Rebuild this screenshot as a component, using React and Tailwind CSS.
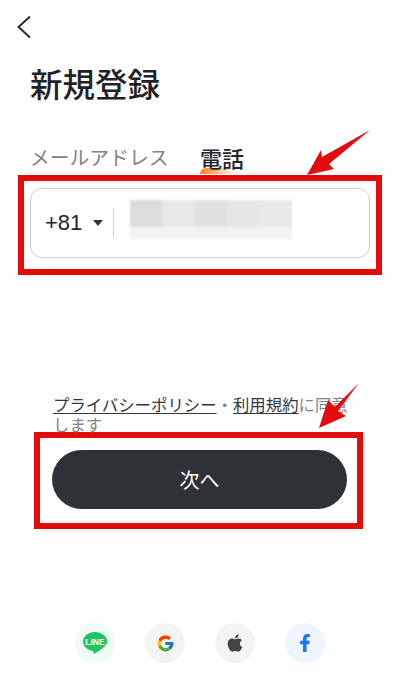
import { FcGoogle } from 'react-icons/fc';
import { FaApple, FaFacebookF } from 'react-icons/fa';

const BLUR_BLOCKS = ['bg-[#dcdcdc]', 'bg-[#e8e8e8]', 'bg-[#e1e1e1]', 'bg-[#e6e6e6]', 'bg-[#e8e8e8]'];

function SocialButton({ className, children }) {
  return (
    <button className={`w-10 h-10 rounded-full flex items-center justify-center ${className}`}>
      {children}
    </button>
  );
}

export default function App() {
  return (
    <div className="relative w-[400px] h-[684px] overflow-hidden bg-white text-[#22252a] font-['Noto_Sans_CJK_JP','Liberation_Sans',sans-serif]">
      {/* back */}
      <div className="pt-[15px] pl-[16px] h-[64px]">
        <svg width="16" height="24" viewBox="0 0 16 24" fill="none" stroke="#222" strokeWidth="1.8">
          <path d="M14 1.5 L2.5 12 L14 22.5" />
        </svg>
      </div>

      <h1 className="pl-[30px] h-[50px] mt-[-3px] text-[32.5px] leading-[44px] font-medium text-[#1f2226]">新規登録</h1>

      {/* tabs */}
      <div className="flex items-end pl-[30px] h-[64px]">
        <div className="text-[19.8px] leading-[28px] text-[#808285] w-[170px] mb-[4px]">メールアドレス</div>
        <div className="relative text-[22px] leading-[30px] font-medium text-[#22252a] mb-[3px]">
          <span className="relative z-10">電話</span>
          <div className="absolute left-0 top-[26px] w-[36px] h-[6px] rounded-tl-full bg-gradient-to-r from-[#f58220] to-transparent"></div>
        </div>
      </div>

      {/* phone input */}
      <div className="ml-[18px] w-[364px] h-[100px] border-[6px] border-[#e30b0b] px-[6px] pt-[7px]">
        <div className="flex items-center h-[70px] rounded-[12px] border border-[#cfcfcf] pl-[14px]">
          <span className="text-[22px] leading-none w-[38px] font-['Liberation_Sans',sans-serif]">+81</span>
          <div className="ml-[10px] w-0 h-0 border-x-[5px] border-x-transparent border-t-[6px] border-t-[#333]"></div>
          <div className="ml-[10px] w-px h-[30px] bg-[#d4d4d4]"></div>
          <div className="ml-[16px] mt-[-8px] w-[162px] blur-[1px]">
            <div className="flex h-[27px]">
              {BLUR_BLOCKS.map((c, i) => (
                <div key={i} className={`flex-1 ${c}`}></div>
              ))}
            </div>
            <div className="h-[12px] bg-[#f1f3f3]"></div>
          </div>
        </div>
      </div>

      {/* terms */}
      <div className="mt-[119px] ml-[53px] w-[298px] text-[16.4px] leading-[20px] text-[#808285]">
        <span className="underline underline-offset-2 text-[#33363a]">プライバシーポリシー</span>
        <span>・</span>
        <span className="underline underline-offset-2 text-[#33363a]">利用規約</span>
        <span>に同意します</span>
      </div>

      {/* next */}
      <div className="ml-[34px] mt-[-2px] w-[329px] h-[97px] border-[6px] border-[#e30b0b] px-[12px] pt-[12px]">
        <button className="w-[295px] h-[59px] rounded-full bg-[#2e3136] text-white text-[20px]">次へ</button>
      </div>

      {/* social login */}
      <div className="mt-[94px] flex justify-center gap-[30px]">
        <SocialButton className="bg-[#effbf5]">
          <svg width="26" height="26" viewBox="0 0 26 26">
            <path d="M13 2C6.400 2 1 6.300 1 11.600c0 4.700 4.200 8.600 9.800 9.400.9.200.7 1 .5 2-.1.700.3 1 1 .7 2.600-1.300 9.200-5.500 11.400-8.600 1-1.300 1.800-2.500 1.800-3.500C25 6.300 19.600 2 13 2z" fill="#1fc35f" />
            <text x="13" y="15" textAnchor="middle" fontSize="8.500" fontWeight="700" fill="#fff" fontFamily="Liberation Sans, sans-serif">LINE</text>
          </svg>
        </SocialButton>
        <SocialButton className="bg-[#f4f4f4]">
          <FcGoogle size={19} />
        </SocialButton>
        <SocialButton className="bg-[#f4f4f4]">
          <FaApple size={20} color="#444" />
        </SocialButton>
        <SocialButton className="bg-[#eff5ff]">
          <FaFacebookF size={18} color="#1877f2" />
        </SocialButton>
      </div>

      {/* annotation arrows */}
      <svg className="absolute left-0 top-0 pointer-events-none" width="400" height="684" viewBox="0 0 400 684">
        <polygon points="370,130 322,157 321,150 307,175 334,169 329,164" fill="#e30b0b" />
        <polygon points="359,383 335,407 328,400 319,428 346,416 338,411" fill="#e30b0b" />
      </svg>
    </div>
  );
}
